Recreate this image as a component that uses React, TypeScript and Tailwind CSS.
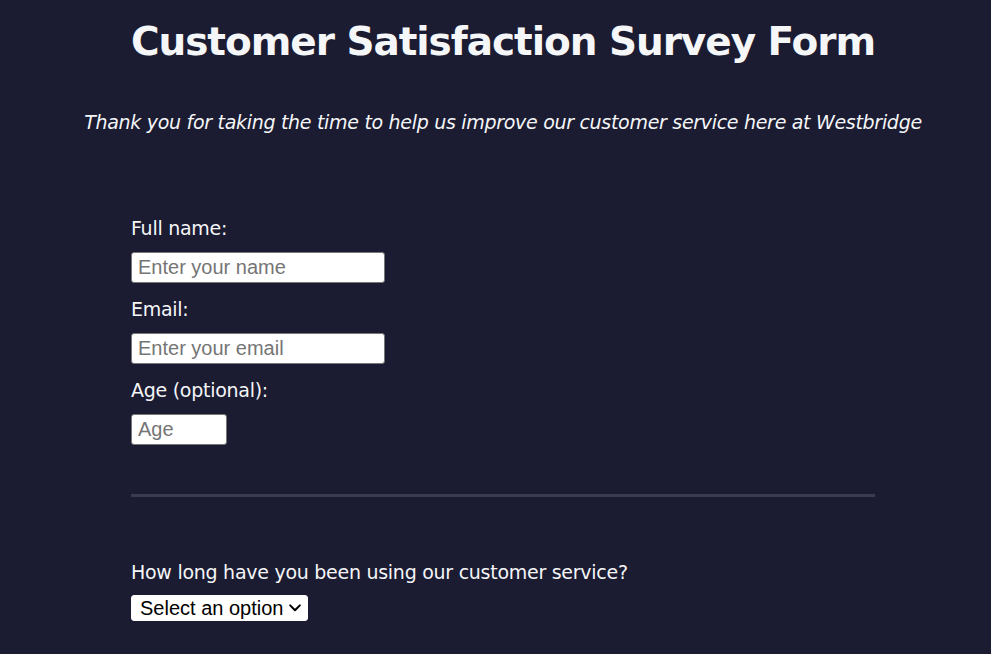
import React from "react";

export default function App() {
  const labelCls = "block text-[19px] leading-[24px] tracking-[-0.27px] text-[#f5f6f7]";
  const inputCls =
    "mt-[12px] block h-[31px] bg-white border border-[#767676] rounded-[3px] pl-[6px] pr-[4px] text-[20px] text-black placeholder:text-[#757575] outline-none";
  const arial = { fontFamily: '"Liberation Sans", Arial, sans-serif' };
  return (
    <div
      className="min-h-[654px] w-full bg-[#1b1b32] text-[#f5f6f7] pl-[15px] overflow-hidden"
      style={{ fontFamily: '"DejaVu Sans", Tahoma, sans-serif' }}
    >
      <h1 className="pt-[19px] text-center text-[39px] leading-[46px] font-bold tracking-[-1.05px]">
        Customer Satisfaction Survey Form
      </h1>
      <p className="mt-[45px] text-center italic text-[19px] leading-[24px] tracking-[-0.3px]">
        Thank you for taking the time to help us improve our customer service here at Westbridge
      </p>
      <form className="mx-auto mt-[82px] w-[744px]">
        <div>
          <label className={labelCls} htmlFor="name">Full name:</label>
          <input id="name" type="text" placeholder="Enter your name" className={inputCls + " w-[254px]"} style={arial} />
        </div>
        <div className="mt-[14px]">
          <label className={labelCls} htmlFor="email">Email:</label>
          <input id="email" type="email" placeholder="Enter your email" className={inputCls + " w-[254px]"} style={arial} />
        </div>
        <div className="mt-[14px]">
          <label className={labelCls} htmlFor="age">Age (optional):</label>
          <input id="age" type="text" placeholder="Age" className={inputCls + " w-[96px]"} style={arial} />
        </div>
        <hr className="mt-[49px] h-[3px] border-0 bg-[#3b3b4f]" />
        <div className="mt-[63px]">
          <label className={labelCls} htmlFor="dur">How long have you been using our customer service?</label>
          <div className="relative mt-[11px] w-[177px]">
            <select
              id="dur"
              className="block h-[26px] w-[177px] appearance-none bg-white text-black border border-white rounded-[3px] text-[20px] leading-[24px] pl-[8px] outline-none"
              style={arial}
              defaultValue=""
            >
              <option value="" disabled>Select an option</option>
              <option>Less than a year</option>
              <option>1-3 years</option>
              <option>More than 3 years</option>
            </select>
            <svg
              className="pointer-events-none absolute left-[158px] top-[9px]"
              width="12"
              height="8"
              viewBox="0 0 12 8"
              fill="none"
            >
              <path d="M1.2 1.4 L6 6.2 L10.8 1.4" stroke="#000" strokeWidth="2" strokeLinecap="round" strokeLinejoin="round" />
            </svg>
          </div>
        </div>
      </form>
    </div>
  );
}
